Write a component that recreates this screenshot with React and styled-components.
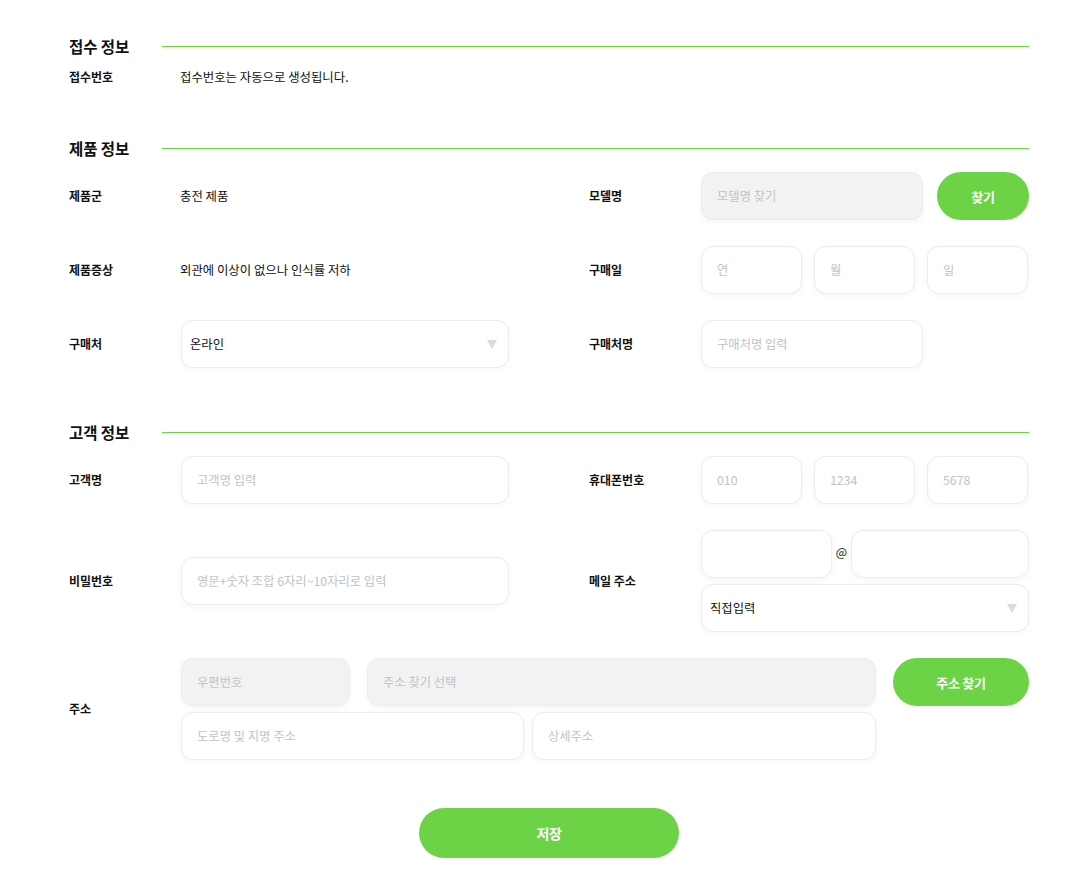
import React from "react";
import styled, { createGlobalStyle } from "styled-components";

const GREEN = "#6dd346";

const Global = createGlobalStyle`
  html, body { margin: 0; padding: 0; background: #fff; }
  body {
    font-family: "Noto Sans CJK KR", "Noto Sans", sans-serif;
    color: #111;
    -webkit-font-smoothing: antialiased;
  }
  * { box-sizing: border-box; }
`;

const Page = styled.div`
  width: 1090px;
  padding: 36px 0 16px 69px;
`;

const Container = styled.div`
  width: 960px;
  display: flex;
  flex-direction: column;
  gap: 54px;
`;

const Section = styled.section`
  display: flex;
  flex-direction: column;
  gap: 14px;
`;

const TitleRow = styled.div`
  display: flex;
  align-items: center;
  height: 20px;
`;

const Title = styled.h2`
  margin: 0;
  width: 93px;
  font-size: 15.5px;
  font-weight: 700;
  letter-spacing: -0.1px;
  line-height: 20px;
  color: #111;
`;

const Rule = styled.div`
  flex: 1;
  height: 1px;
  background: ${GREEN};
`;

const Rows = styled.div`
  display: flex;
  flex-direction: column;
  gap: 26px;
`;

const Row = styled.div`
  display: grid;
  grid-template-columns: 440px 440px;
  column-gap: 80px;
  align-items: center;
`;

const Field = styled.div`
  display: flex;
  align-items: center;
  min-height: ${(p) => (p.$compact ? "14px" : "48px")};
  line-height: ${(p) => (p.$compact ? "14px" : "normal")};
`;

const Label = styled.div`
  width: 112px;
  flex-shrink: 0;
  font-size: 12px;
  font-weight: 700;
  color: #111;
  margin-top: -1px;
`;

const Value = styled.div`
  font-size: 12.4px;
  color: #111;
  margin-left: -1px;
`;

const Input = styled.input`
  width: ${(p) => p.$w || "328px"};
  height: 48px;
  flex-shrink: 0;
  border: 1px solid #ebebf0;
  border-radius: 12px;
  background: ${(p) => (p.disabled ? "#f2f2f2" : "#fff")};
  box-shadow: 0 2px 6px rgba(0, 0, 0, 0.04);
  padding: 0 15px;
  font-family: inherit;
  font-size: 12.3px;
  color: #111;
  outline: none;
  &::placeholder { color: #c2c2c2; }
`;

const SelectBox = styled.div`
  width: ${(p) => p.$w || "328px"};
  height: 48px;
  border: 1px solid #ebebf0;
  border-radius: 12px;
  background: #fff;
  box-shadow: 0 2px 6px rgba(0, 0, 0, 0.04);
  padding: 0 11px 0 8px;
  display: flex;
  align-items: center;
  justify-content: space-between;
  font-size: 12.3px;
  color: #111;
`;

const Inline = styled.div`
  display: flex;
  align-items: center;
  gap: ${(p) => p.$gap || "12px"};
`;

const Stack = styled.div`
  display: flex;
  flex-direction: column;
  gap: ${(p) => p.$gap || "6px"};
`;

const At = styled.span`
  width: 19px;
  text-align: center;
  font-size: 12px;
  color: #111;
  margin-top: -6px;
`;

const GreenButton = styled.button`
  width: ${(p) => p.$w};
  height: ${(p) => p.$h || "48px"};
  flex-shrink: 0;
  border: none;
  border-radius: 999px;
  background: ${GREEN};
  color: #fff;
  font-family: inherit;
  font-size: ${(p) => p.$fs || "13px"};
  font-weight: 700;
  letter-spacing: -0.3px;
  cursor: pointer;
`;

const AddrGrid = styled.div`
  display: flex;
  flex-direction: column;
  gap: 6px;
`;

const AddrRow = styled.div`
  display: flex;
  align-items: center;
  gap: ${(p) => p.$gap};
`;

const Footer = styled.div`
  display: flex;
  justify-content: center;
  margin-top: -6px;
`;

const Arrow = () => (
  <svg width="10" height="9" viewBox="0 0 10 9">
    <polygon points="0,0 10,0 5,9" fill="#dadada" />
  </svg>
);

export default function App() {
  return (
    <Page>
      <Global />
      <Container>
        <Section>
          <TitleRow>
            <Title>접수 정보</Title>
            <Rule />
          </TitleRow>
          <Rows>
            <Field $compact>
              <Label>접수번호</Label>
              <Value>접수번호는 자동으로 생성됩니다.</Value>
            </Field>
          </Rows>
        </Section>

        <Section>
          <TitleRow>
            <Title>제품 정보</Title>
            <Rule />
          </TitleRow>
          <Rows>
            <Row>
              <Field>
                <Label>제품군</Label>
                <Value>충전 제품</Value>
              </Field>
              <Field>
                <Label>모델명</Label>
                <Inline $gap="14px">
                  <Input $w="222px" disabled placeholder="모델명 찾기" />
                  <GreenButton $w="92px">찾기</GreenButton>
                </Inline>
              </Field>
            </Row>
            <Row>
              <Field>
                <Label>제품증상</Label>
                <Value>외관에 이상이 없으나 인식률 저하</Value>
              </Field>
              <Field>
                <Label>구매일</Label>
                <Inline $gap="12px">
                  <Input $w="101px" placeholder="연" />
                  <Input $w="101px" placeholder="월" />
                  <Input $w="101px" placeholder="일" />
                </Inline>
              </Field>
            </Row>
            <Row>
              <Field>
                <Label>구매처</Label>
                <SelectBox>
                  <span>온라인</span>
                  <Arrow />
                </SelectBox>
              </Field>
              <Field>
                <Label>구매처명</Label>
                <Input $w="222px" placeholder="구매처명 입력" />
              </Field>
            </Row>
          </Rows>
        </Section>

        <Section>
          <TitleRow>
            <Title>고객 정보</Title>
            <Rule />
          </TitleRow>
          <Rows>
            <Row>
              <Field>
                <Label>고객명</Label>
                <Input placeholder="고객명 입력" />
              </Field>
              <Field>
                <Label>휴대폰번호</Label>
                <Inline $gap="12px">
                  <Input $w="101px" placeholder="010" />
                  <Input $w="101px" placeholder="1234" />
                  <Input $w="101px" placeholder="5678" />
                </Inline>
              </Field>
            </Row>
            <Row>
              <Field>
                <Label>비밀번호</Label>
                <Input placeholder="영문+숫자 조합 6자리~10자리로 입력" />
              </Field>
              <Field>
                <Label>메일 주소</Label>
                <Stack $gap="6px">
                  <Inline $gap="0">
                    <Input $w="131px" />
                    <At>@</At>
                    <Input $w="178px" />
                  </Inline>
                  <SelectBox>
                    <span>직접입력</span>
                    <Arrow />
                  </SelectBox>
                </Stack>
              </Field>
            </Row>
            <Field>
              <Label>주소</Label>
              <AddrGrid>
                <AddrRow $gap="17px">
                  <Input $w="169px" disabled placeholder="우편번호" />
                  <Input $w="509px" disabled placeholder="주소 찾기 선택" />
                  <GreenButton $w="136px">주소 찾기</GreenButton>
                </AddrRow>
                <AddrRow $gap="8px">
                  <Input $w="343px" placeholder="도로명 및 지명 주소" />
                  <Input $w="344px" placeholder="상세주소" />
                </AddrRow>
              </AddrGrid>
            </Field>
          </Rows>
        </Section>

        <Footer>
          <GreenButton $w="260px" $h="50px" $fs="14px">저장</GreenButton>
        </Footer>
      </Container>
    </Page>
  );
}
